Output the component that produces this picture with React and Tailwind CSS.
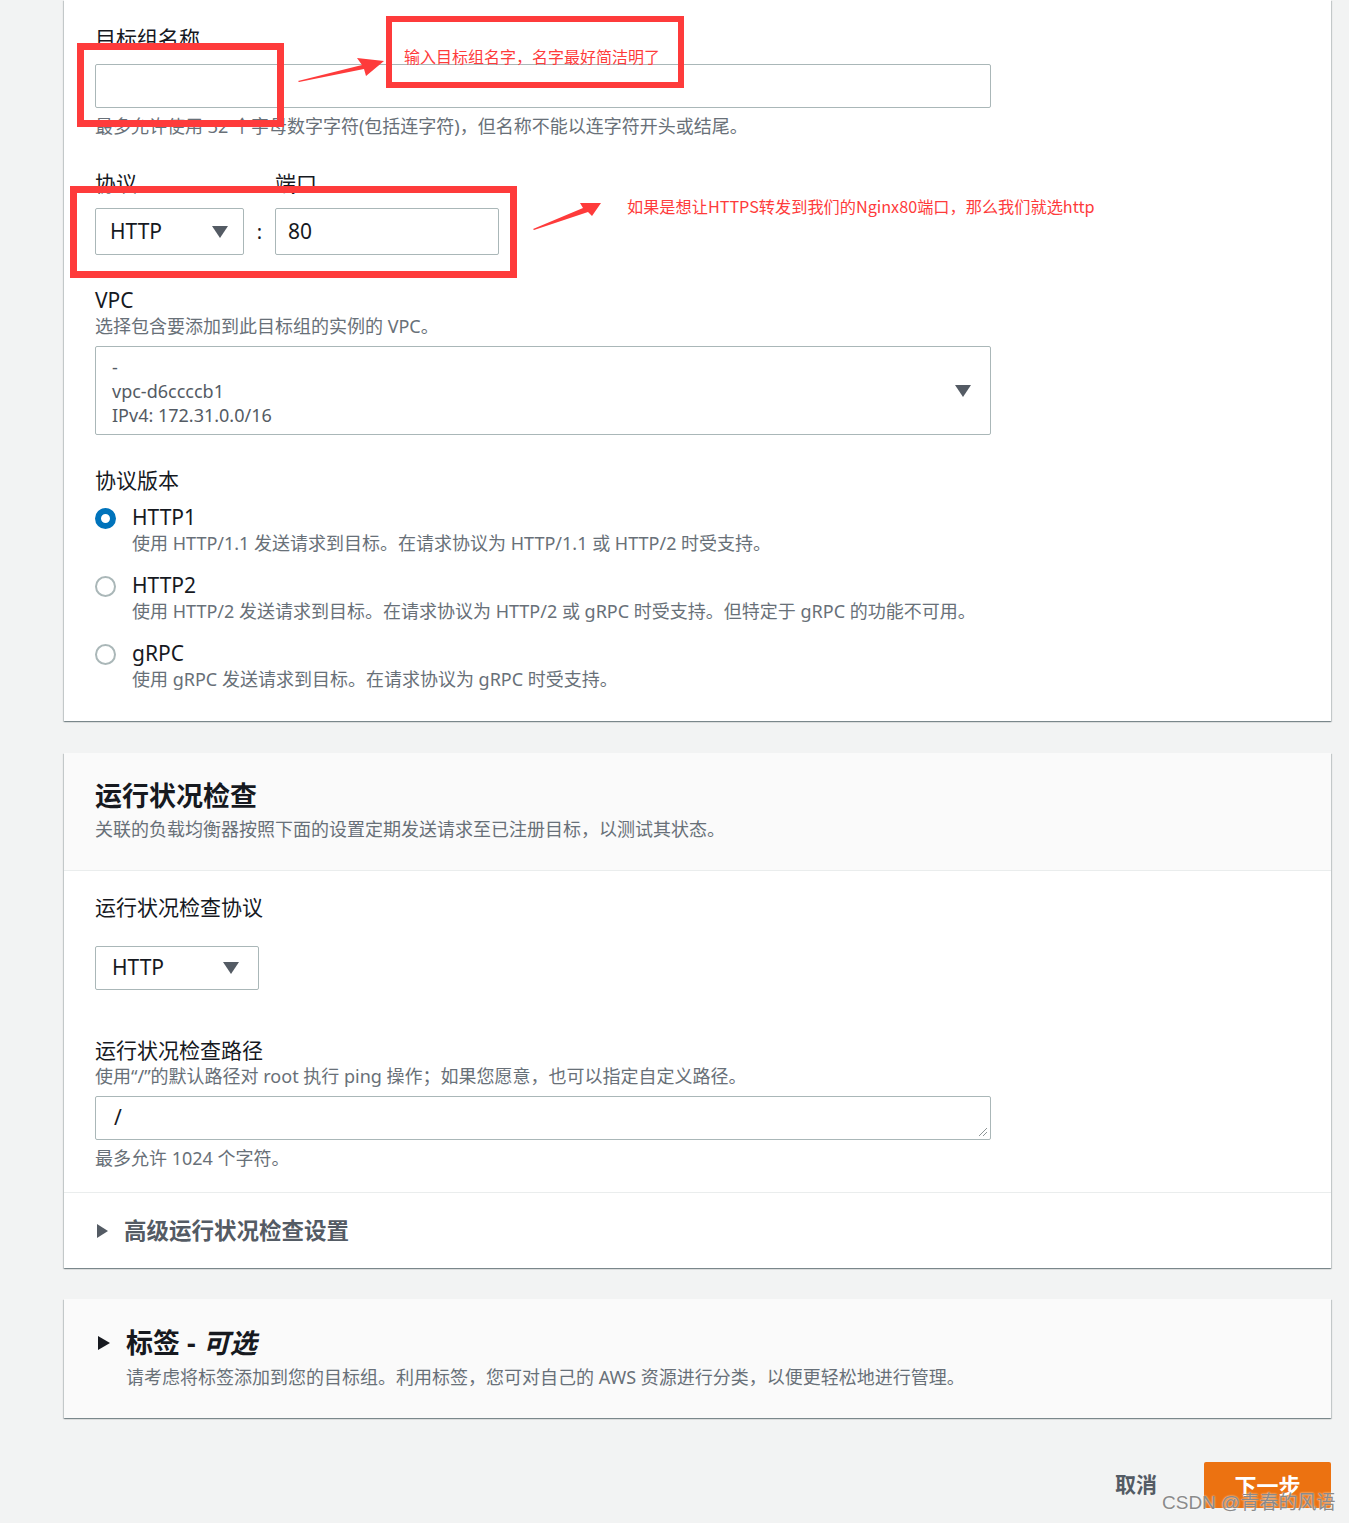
import React from 'react';

const Caret = ({ className = '' }) => (
  <svg width="16" height="12" viewBox="0 0 16 12" className={className}>
    <path d="M0 0 H16 L8 12 Z" fill="#545b64" />
  </svg>
);

const Radio = ({ checked, label, desc }) => (
  <div className="flex gap-[16px]">
    <div className="pt-[4px]">
      {checked ? (
        <div className="w-[21px] h-[21px] rounded-full border-[6px] border-[#0073bb] bg-white" />
      ) : (
        <div className="w-[21px] h-[21px] rounded-full border-2 border-[#aab7b8] bg-white" />
      )}
    </div>
    <div>
      <div className="text-[21px] leading-[26px] text-[#16191f]">{label}</div>
      <div className="text-[18px] leading-[24px] text-[#687078] mt-[1px]">{desc}</div>
    </div>
  </div>
);

const cardShadow =
  'shadow-[0_1px_1px_0_rgba(0,28,36,0.3),1px_1px_1px_0_rgba(0,28,36,0.15),-1px_1px_1px_0_rgba(0,28,36,0.15)]';

export default function App() {
  return (
    <div className="relative min-h-[1523px] bg-[#f2f3f3] font-['Noto_Sans','Noto_Sans_CJK_SC',sans-serif] text-[#16191f]">
      <div className="ml-[64px] w-[1267px]">
        {/* target group basics */}
        <div className={`bg-white px-[31px] pt-[25px] pb-[30px] ${cardShadow}`}>
          <div className="text-[21px] leading-[26px]">目标组名称</div>
          <div className="mt-[13px] w-[896px] h-[44px] border border-[#aab7b8] rounded-[2px] bg-white" />
          <div className="mt-[6px] text-[18px] leading-[24px] text-[#687078]">
            最多允许使用 32 个字母数字字符(包括连字符)，但名称不能以连字符开头或结尾。
          </div>

          <div className="mt-[32px] flex items-end">
            <div className="w-[149px]">
              <div className="text-[21px] leading-[26px]">协议</div>
              <div className="mt-[12px] h-[47px] border border-[#aab7b8] rounded-[2px] flex items-center justify-between pl-[14px] pr-[15px]">
                <span className="text-[21px]">HTTP</span>
                <Caret />
              </div>
            </div>
            <div className="w-[31px] h-[47px] flex items-center justify-center text-[20px]">:</div>
            <div className="w-[224px]">
              <div className="text-[21px] leading-[26px]">端口</div>
              <div className="mt-[12px] h-[47px] border border-[#aab7b8] rounded-[2px] flex items-center pl-[12px]">
                <span className="text-[21px]">80</span>
              </div>
            </div>
          </div>

          <div className="mt-[32px] text-[21px] leading-[26px]">VPC</div>
          <div className="mt-[1px] text-[18px] leading-[24px] text-[#687078]">选择包含要添加到此目标组的实例的 VPC。</div>
          <div className="mt-[8px] w-[896px] h-[89px] border border-[#aab7b8] rounded-[2px] flex items-center justify-between pl-[16px] pr-[19px]">
            <div className="text-[18px] leading-[24px] text-[#545b64] pt-[1px]">
              <div>-</div>
              <div>vpc-d6ccccb1</div>
              <div>IPv4: 172.31.0.0/16</div>
            </div>
            <Caret />
          </div>

          <div className="mt-[32px] text-[21px] leading-[26px]">协议版本</div>
          <div className="mt-[11px] flex flex-col gap-[17px]">
            <Radio checked label="HTTP1" desc="使用 HTTP/1.1 发送请求到目标。在请求协议为 HTTP/1.1 或 HTTP/2 时受支持。" />
            <Radio label="HTTP2" desc="使用 HTTP/2 发送请求到目标。在请求协议为 HTTP/2 或 gRPC 时受支持。但特定于 gRPC 的功能不可用。" />
            <Radio label="gRPC" desc="使用 gRPC 发送请求到目标。在请求协议为 gRPC 时受支持。" />
          </div>
        </div>

        {/* health checks */}
        <div className={`mt-[32px] bg-white ${cardShadow}`}>
          <div className="bg-[#fafafa] border-b border-[#eaeded] px-[31px] pt-[26px] pb-[29px]">
            <div className="text-[27px] leading-[34px] font-bold">运行状况检查</div>
            <div className="mt-[4px] text-[18px] leading-[24px] text-[#687078]">
              关联的负载均衡器按照下面的设置定期发送请求至已注册目标，以测试其状态。
            </div>
          </div>
          <div className="px-[31px] pt-[23px] pb-[22px]">
            <div className="text-[21px] leading-[26px]">运行状况检查协议</div>
            <div className="mt-[26px] w-[164px] h-[44px] border border-[#aab7b8] rounded-[2px] flex items-center justify-between pl-[16px] pr-[19px]">
              <span className="text-[21px]">HTTP</span>
              <Caret />
            </div>

            <div className="mt-[47px] text-[21px] leading-[26px]">运行状况检查路径</div>
            <div className="mt-[1px] text-[18px] leading-[24px] text-[#687078]">
              使用“/”的默认路径对 root 执行 ping 操作；如果您愿意，也可以指定自定义路径。
            </div>
            <div className="relative mt-[8px] w-[896px] h-[44px] border border-[#aab7b8] rounded-[2px] flex items-center pl-[18px]">
              <span className="text-[21px]">/</span>
              <svg width="10" height="10" viewBox="0 0 10 10" className="absolute right-[2px] bottom-[2px]">
                <path d="M9 1 L1 9 M9 5 L5 9" stroke="#8d9596" strokeWidth="1" />
              </svg>
            </div>
            <div className="mt-[6px] text-[18px] leading-[24px] text-[#687078]">最多允许 1024 个字符。</div>
          </div>
          <div className="border-t border-[#eaeded] px-[31px] pt-[23px] pb-[22px] flex items-center gap-[16px]">
            <svg width="11" height="14" viewBox="0 0 11 14" className="ml-[2px]">
              <path d="M0 0 L11 7 L0 14 Z" fill="#545b64" />
            </svg>
            <span className="text-[22.5px] leading-[30px] font-bold text-[#545b64]">高级运行状况检查设置</span>
          </div>
        </div>

        {/* tags */}
        <div className={`mt-[31px] bg-[#fafafa] px-[31px] pt-[27px] pb-[29px] ${cardShadow}`}>
          <div className="flex items-center gap-[16px]">
            <svg width="12" height="14" viewBox="0 0 12 14" className="ml-[3px]">
              <path d="M0 0 L12 7 L0 14 Z" fill="#16191f" />
            </svg>
            <span className="text-[27px] leading-[34px] font-bold">
              标签 - <i>可选</i>
            </span>
          </div>
          <div className="mt-[5px] pl-[31px] text-[18px] leading-[24px] text-[#687078]">
            请考虑将标签添加到您的目标组。利用标签，您可对自己的 AWS 资源进行分类，以便更轻松地进行管理。
          </div>
        </div>

        {/* footer */}
        <div className="mt-[44px] flex justify-end items-center gap-[47px]">
          <span className="text-[21px] font-bold text-[#545b64]">取消</span>
          <div className="w-[127px] h-[46px] bg-[#ec7211] rounded-[2px] flex items-center justify-center text-white text-[22px] font-bold">
            下一步
          </div>
        </div>
      </div>

      {/* annotations */}
      <div className="absolute left-[77px] top-[43px] w-[207px] h-[84px] border-[7px] border-[#fe3b3b] pointer-events-none" />
      <div className="absolute left-[386px] top-[16px] w-[298px] h-[72px] border-[6px] border-[#fe3b3b] pointer-events-none" />
      <div className="absolute left-[404px] top-[44px] text-[16px] leading-[24px] text-[#fe3b3b] font-['Noto_Sans_CJK_SC',sans-serif]">
        输入目标组名字，名字最好简洁明了
      </div>
      <div className="absolute left-[70px] top-[186px] w-[447px] h-[92px] border-[7px] border-[#fe3b3b] pointer-events-none" />
      <div className="absolute left-[627px] top-[194px] text-[16.2px] leading-[24px] text-[#fe3b3b] font-['Noto_Sans_CJK_SC',sans-serif]">
        如果是想让HTTPS转发到我们的Nginx80端口，那么我们就选http
      </div>
      <svg className="absolute left-0 top-0 pointer-events-none" width="1349" height="300">
        <path d="M298 81 L362 65 L357 58 L384 61 L366 76 L364 69 L299 82 Z" fill="#fe3b3b" />
        <path d="M533 229 L583 208 L580 203 L601 203 L592 216 L588 212 L534 230 Z" fill="#fe3b3b" />
      </svg>

      {/* watermark */}
      <div className="absolute left-[1162px] top-[1490px] text-[19px] leading-[26px] text-[#8a8a8a] font-['Liberation_Sans','Noto_Sans_CJK_SC',sans-serif] [text-shadow:0_0_2px_white]">
        CSDN @青春的风语
      </div>
    </div>
  );
}
